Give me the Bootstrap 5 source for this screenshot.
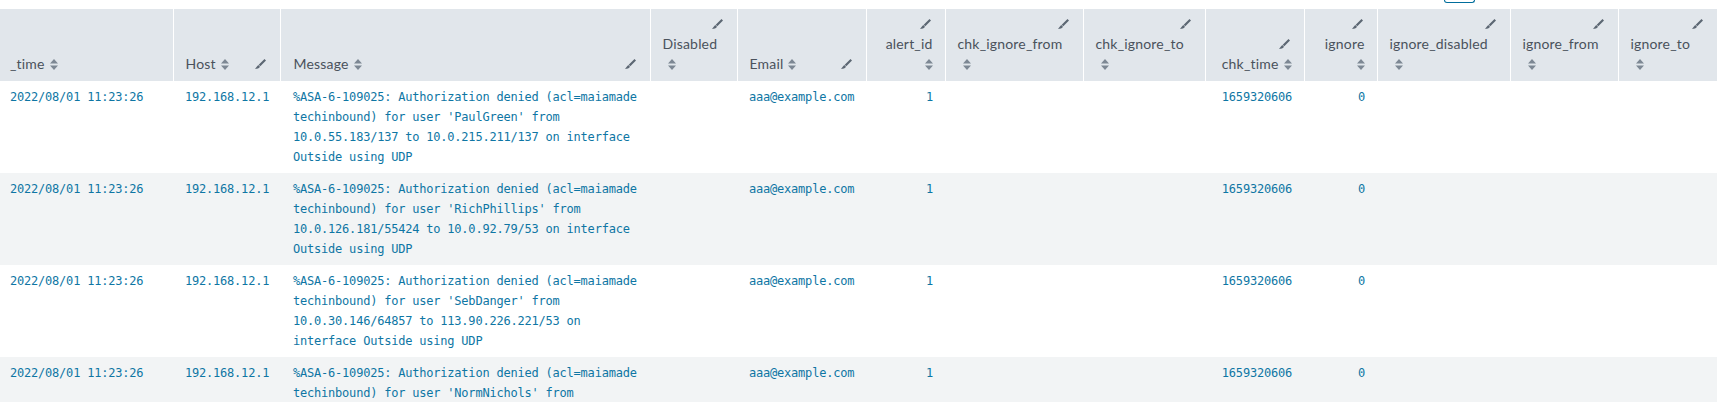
<!DOCTYPE html>
<html lang="en">
<head>
<meta charset="utf-8">
<title>Search results</title>
<link href="https://cdn.jsdelivr.net/npm/bootstrap@5.3.0/dist/css/bootstrap.min.css" rel="stylesheet">
<style>
html,body{height:402px;overflow:hidden;background:#fff}
.top-strip{height:9px}
.clip-btn{width:31px;height:3px;margin-left:1444px;border:1px solid #006d9c;border-top:0;border-radius:0 0 3px 3px}
.log-grid{table-layout:fixed;width:1717px;border-collapse:collapse;--bs-table-bg:transparent}
.log-grid>thead>tr>th{background:#e1e6eb;color:#4a525c;font:400 14px/20px Lato,"Liberation Sans",sans-serif;letter-spacing:.18px;padding:5px 12px 7px;vertical-align:bottom;border-right:1px solid #fff}
.log-grid>thead>tr>th:first-child{padding-left:10px}
.log-grid>thead>tr>th:nth-child(3),.log-grid>tbody>tr>td:nth-child(3){padding-left:13px}
.log-grid>thead>tr>th:last-child{border-right:0}
.log-grid>tbody>tr>td{font:400 12px/20px "DejaVu Sans Mono",monospace;letter-spacing:-.21px;color:#0e76a4;padding:6px 12px;vertical-align:top}
.log-grid>tbody>tr>td:first-child{padding-left:10px}
.log-grid>tbody>tr:nth-child(even)>td{background:#f2f4f5}
.log-grid th:nth-child(1){width:173px}
.log-grid th:nth-child(2){width:107px}
.log-grid th:nth-child(3){width:370px}
.log-grid th:nth-child(4){width:87px}
.log-grid th:nth-child(5){width:129px}
.log-grid th:nth-child(6){width:79px}
.log-grid th:nth-child(7){width:138px}
.log-grid th:nth-child(8){width:122px}
.log-grid th:nth-child(9){width:99px}
.log-grid th:nth-child(10){width:73px}
.log-grid th:nth-child(11){width:133px}
.log-grid th:nth-child(12){width:108px}
.log-grid th:nth-child(13){width:99px}
.sort-ic{width:8px;height:11px;margin-left:5px;vertical-align:-1px;fill:#7d8894}
.pen-ic{width:11px;height:10px;margin-right:2px;display:block;fill:#5c6773}
.pen-row{height:20px}
.sort-line{height:20px}
</style>
</head>
<body>
<svg width="0" height="0" class="position-absolute">
  <symbol id="s" viewBox="0 0 8 11"><path d="M4 0 8 4.500H0zM0 6.500h8L4 11z"/></symbol>
  <symbol id="p" viewBox="0 0 11 10"><path d="M9.500 0 11 1.500 5.300 7.300 3.700 5.700zM3.300 6 5 7.700C4.400 9.300 2 9.800 0 10 1.200 9 1.800 7 3.300 6z"/></symbol>
</svg>
<div class="top-strip"><div class="clip-btn"></div></div>
<table class="table table-borderless mb-0 log-grid">
<thead><tr>
<th>_time<svg class="sort-ic"><use href="#s"/></svg></th>
<th><div class="d-flex justify-content-between align-items-center"><span>Host<svg class="sort-ic"><use href="#s"/></svg></span><svg class="pen-ic"><use href="#p"/></svg></div></th>
<th><div class="d-flex justify-content-between align-items-center"><span>Message<svg class="sort-ic"><use href="#s"/></svg></span><svg class="pen-ic"><use href="#p"/></svg></div></th>
<th><div class="pen-row d-flex justify-content-end align-items-center"><svg class="pen-ic"><use href="#p"/></svg></div>Disabled<div class="sort-line"><svg class="sort-ic"><use href="#s"/></svg></div></th>
<th><div class="d-flex justify-content-between align-items-center"><span>Email<svg class="sort-ic"><use href="#s"/></svg></span><svg class="pen-ic"><use href="#p"/></svg></div></th>
<th class="text-end"><div class="pen-row d-flex justify-content-end align-items-center"><svg class="pen-ic"><use href="#p"/></svg></div>alert_id<div class="sort-line"><svg class="sort-ic"><use href="#s"/></svg></div></th>
<th><div class="pen-row d-flex justify-content-end align-items-center"><svg class="pen-ic"><use href="#p"/></svg></div>chk_ignore_from<div class="sort-line"><svg class="sort-ic"><use href="#s"/></svg></div></th>
<th><div class="pen-row d-flex justify-content-end align-items-center"><svg class="pen-ic"><use href="#p"/></svg></div>chk_ignore_to<div class="sort-line"><svg class="sort-ic"><use href="#s"/></svg></div></th>
<th class="text-end"><div class="pen-row d-flex justify-content-end align-items-center"><svg class="pen-ic"><use href="#p"/></svg></div>chk_time<svg class="sort-ic"><use href="#s"/></svg></th>
<th class="text-end"><div class="pen-row d-flex justify-content-end align-items-center"><svg class="pen-ic"><use href="#p"/></svg></div>ignore<div class="sort-line"><svg class="sort-ic"><use href="#s"/></svg></div></th>
<th><div class="pen-row d-flex justify-content-end align-items-center"><svg class="pen-ic"><use href="#p"/></svg></div>ignore_disabled<div class="sort-line"><svg class="sort-ic"><use href="#s"/></svg></div></th>
<th><div class="pen-row d-flex justify-content-end align-items-center"><svg class="pen-ic"><use href="#p"/></svg></div>ignore_from<div class="sort-line"><svg class="sort-ic"><use href="#s"/></svg></div></th>
<th><div class="pen-row d-flex justify-content-end align-items-center"><svg class="pen-ic"><use href="#p"/></svg></div>ignore_to<div class="sort-line"><svg class="sort-ic"><use href="#s"/></svg></div></th>
</tr></thead>
<tbody>
<tr><td>2022/08/01 11:23:26</td><td>192.168.12.1</td><td>%ASA-6-109025: Authorization denied (acl=maiamade techinbound) for user 'PaulGreen' from 10.0.55.183/137 to 10.0.215.211/137 on interface Outside using UDP</td><td></td><td>aaa@example.com</td><td class="text-end">1</td><td></td><td></td><td class="text-end">1659320606</td><td class="text-end">0</td><td></td><td></td><td></td></tr>
<tr><td>2022/08/01 11:23:26</td><td>192.168.12.1</td><td>%ASA-6-109025: Authorization denied (acl=maiamade techinbound) for user 'RichPhillips' from 10.0.126.181/55424 to 10.0.92.79/53 on interface Outside using UDP</td><td></td><td>aaa@example.com</td><td class="text-end">1</td><td></td><td></td><td class="text-end">1659320606</td><td class="text-end">0</td><td></td><td></td><td></td></tr>
<tr><td>2022/08/01 11:23:26</td><td>192.168.12.1</td><td>%ASA-6-109025: Authorization denied (acl=maiamade techinbound) for user 'SebDanger' from 10.0.30.146/64857 to 113.90.226.221/53 on interface Outside using UDP</td><td></td><td>aaa@example.com</td><td class="text-end">1</td><td></td><td></td><td class="text-end">1659320606</td><td class="text-end">0</td><td></td><td></td><td></td></tr>
<tr><td>2022/08/01 11:23:26</td><td>192.168.12.1</td><td>%ASA-6-109025: Authorization denied (acl=maiamade techinbound) for user 'NormNichols' from</td><td></td><td>aaa@example.com</td><td class="text-end">1</td><td></td><td></td><td class="text-end">1659320606</td><td class="text-end">0</td><td></td><td></td><td></td></tr>
</tbody>
</table>
<script src="https://cdn.jsdelivr.net/npm/bootstrap@5.3.0/dist/js/bootstrap.bundle.min.js"></script>
</body>
</html>
